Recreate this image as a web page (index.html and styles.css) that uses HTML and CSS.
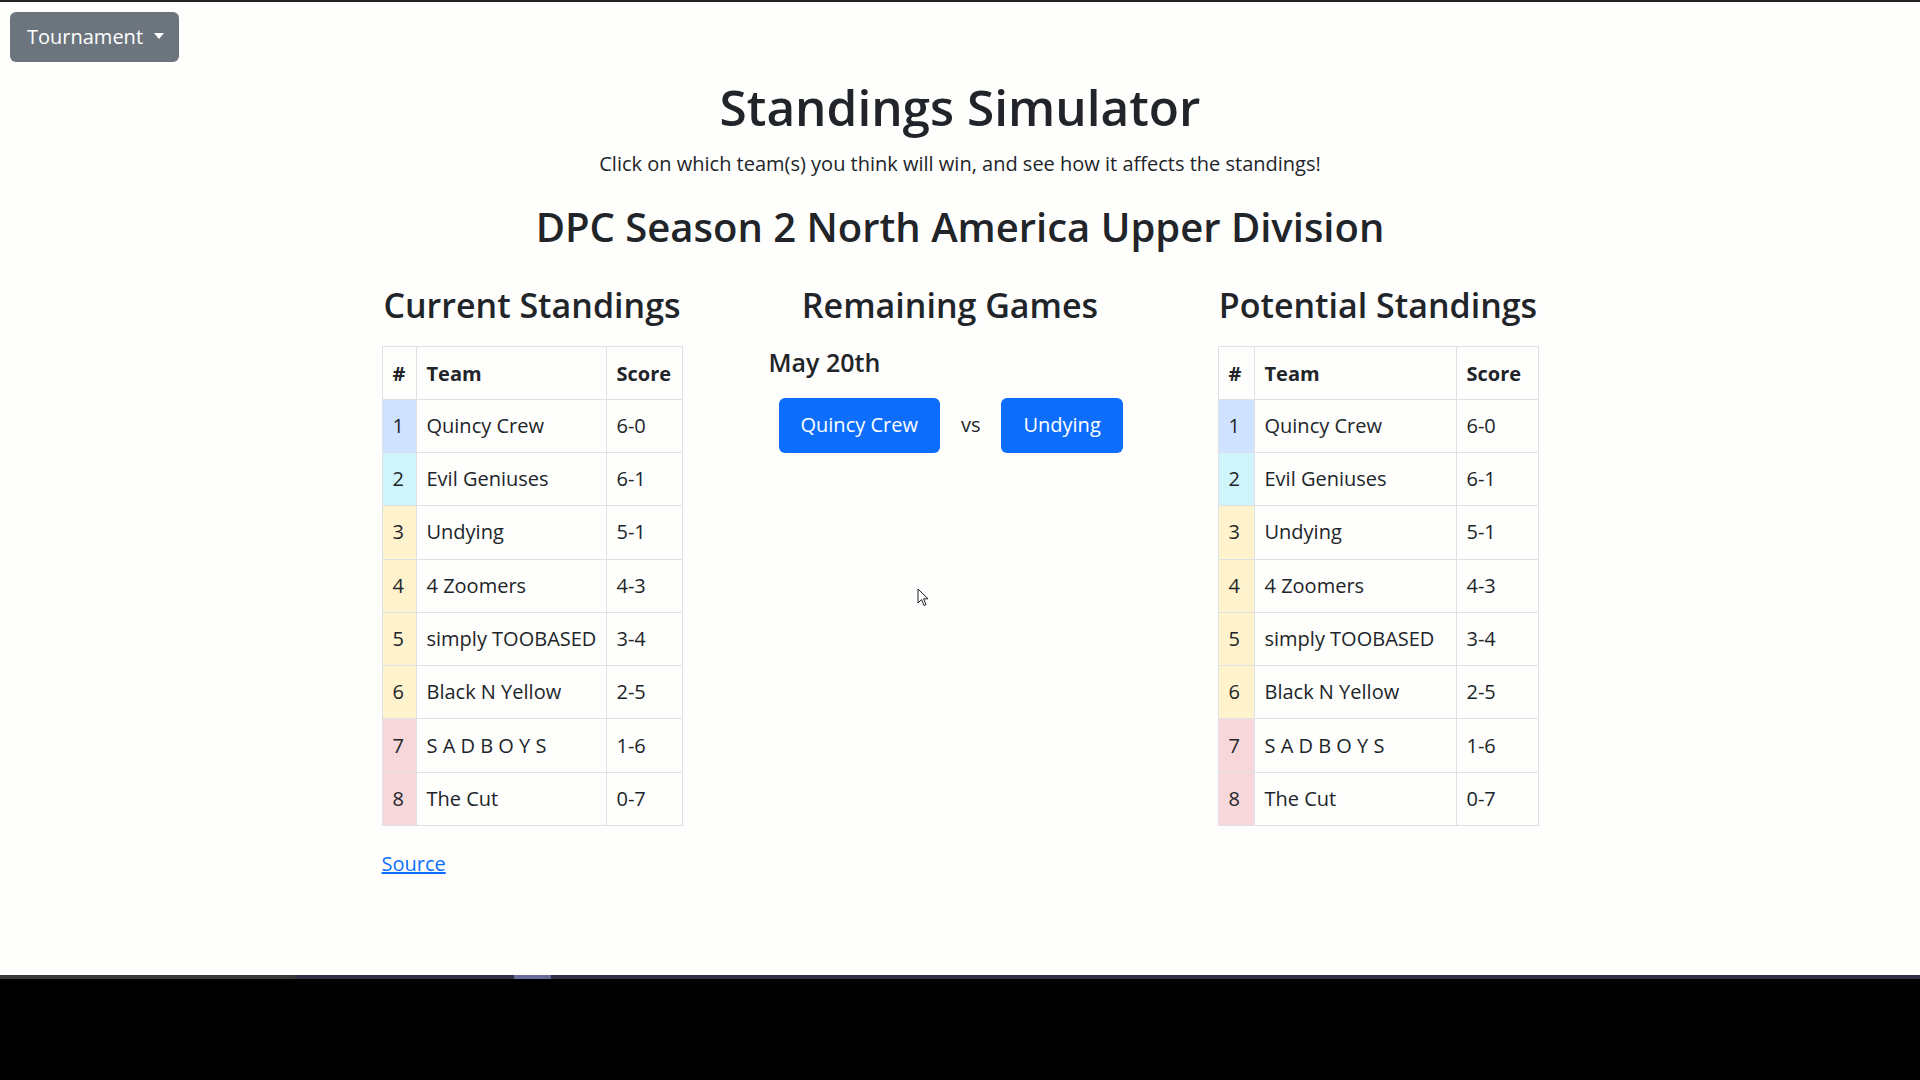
FILE: index.html
```html
<!DOCTYPE html>
<html lang="en">
<head>
<meta charset="utf-8">
<title>Standings Simulator</title>
<link rel="stylesheet" href="styles.css">
</head>
<body>
<div class="page">
  <nav class="nav">
    <button class="btn btn-secondary dropdown-toggle">Tournament</button>
  </nav>
  <main class="main">
    <h1 class="title">Standings Simulator</h1>
    <p class="lead">Click on which team(s) you think will win, and see how it affects the standings!</p>
    <h2 class="division">DPC Season 2 North America Upper Division</h2>
    <div class="row">
      <section class="col col-current">
        <h3 class="col-title">Current Standings</h3>
        <table class="table">
          <colgroup><col class="c-num"><col class="c-team"><col class="c-score"></colgroup>
          <thead><tr><th>#</th><th>Team</th><th>Score</th></tr></thead>
          <tbody>
            <tr><td class="rank primary">1</td><td>Quincy Crew</td><td>6-0</td></tr>
            <tr><td class="rank info">2</td><td>Evil Geniuses</td><td>6-1</td></tr>
            <tr><td class="rank warning">3</td><td>Undying</td><td>5-1</td></tr>
            <tr><td class="rank warning">4</td><td>4 Zoomers</td><td>4-3</td></tr>
            <tr><td class="rank warning">5</td><td>simply TOOBASED</td><td>3-4</td></tr>
            <tr><td class="rank warning">6</td><td>Black N Yellow</td><td>2-5</td></tr>
            <tr><td class="rank danger">7</td><td>S A D B O Y S</td><td>1-6</td></tr>
            <tr><td class="rank danger">8</td><td>The Cut</td><td>0-7</td></tr>
          </tbody>
        </table>
        <a class="source" href="#">Source</a>
      </section>
      <section class="col col-games">
        <h3 class="col-title">Remaining Games</h3>
        <div class="games">
          <h5 class="game-date">May 20th</h5>
          <div class="match">
            <button class="btn btn-primary">Quincy Crew</button>
            <span class="vs">vs</span>
            <button class="btn btn-primary">Undying</button>
          </div>
        </div>
      </section>
      <section class="col col-potential">
        <h3 class="col-title">Potential Standings</h3>
        <table class="table">
          <colgroup><col class="c-num"><col class="c-team"><col class="c-score"></colgroup>
          <thead><tr><th>#</th><th>Team</th><th>Score</th></tr></thead>
          <tbody>
            <tr><td class="rank primary">1</td><td>Quincy Crew</td><td>6-0</td></tr>
            <tr><td class="rank info">2</td><td>Evil Geniuses</td><td>6-1</td></tr>
            <tr><td class="rank warning">3</td><td>Undying</td><td>5-1</td></tr>
            <tr><td class="rank warning">4</td><td>4 Zoomers</td><td>4-3</td></tr>
            <tr><td class="rank warning">5</td><td>simply TOOBASED</td><td>3-4</td></tr>
            <tr><td class="rank warning">6</td><td>Black N Yellow</td><td>2-5</td></tr>
            <tr><td class="rank danger">7</td><td>S A D B O Y S</td><td>1-6</td></tr>
            <tr><td class="rank danger">8</td><td>The Cut</td><td>0-7</td></tr>
          </tbody>
        </table>
      </section>
    </div>
  </main>
  <svg class="cursor" width="12" height="19" viewBox="0 0 12 19"><path d="M1 1 L1 15 L4.5 11.5 L7 17.5 L9 16.6 L6.6 10.8 L11 10.8 Z" fill="#fff" stroke="#222" stroke-width="1"/></svg>
</div>
<div class="strip"><span class="strip-a"></span><span class="strip-b"></span></div>
</body>
</html>
```
FILE: styles.css
```css
* { box-sizing: border-box; }
html, body { margin: 0; padding: 0; }
body {
  background: #000;
  font-family: "Open Sans", "Noto Sans", sans-serif;
  color: #212529;
  font-size: 20px;
  line-height: 1.5;
}
.page {
  position: relative;
  height: 975px;
  background: #fefefc;
  border-top: 2px solid #222;
}
.nav { padding: 10px 10px 0; }
.btn {
  font-family: inherit;
  font-size: 20px;
  line-height: 30px;
  border: 1px solid transparent;
  border-radius: 6px;
  cursor: pointer;
}
.btn-secondary {
  display: inline-flex;
  align-items: center;
  background: #6c757d;
  color: #fff;
  height: 50px;
  padding: 0 14px 0 16px;
}
.dropdown-toggle::after {
  content: "";
  display: inline-block;
  margin-left: 11px;
  margin-top: -3px;
  border-top: 6px solid #fff;
  border-left: 5px solid transparent;
  border-right: 5px solid transparent;
}
.btn-primary {
  display: inline-block;
  background: #0d6efd;
  color: #fff;
  height: 55px;
  padding: 0 21px;
}
.main { text-align: center; }
h1, h2, h3, h5 { font-weight: 600; line-height: 1.2; margin: 0; }
.title { font-size: 49.5px; margin-top: 16px; }
.lead { margin: 11.5px 0 0; }
.division { font-size: 40px; margin-top: 24px; }
.row {
  display: flex;
  justify-content: center;
  margin-top: 34px;
}
.col { padding: 0 15px; text-align: center; }
.col-current { width: 331px; }
.col-games { width: 505px; }
.col-potential { width: 351px; }
.col-title {
  display: flex;
  justify-content: center;
  white-space: nowrap;
  font-size: 34px;
}
.table {
  width: 100%;
  margin-top: 20.5px;
  border-collapse: collapse;
  table-layout: fixed;
  text-align: left;
  border: 1px solid #dee2e6;
}
.col-current .c-num { width: 34px; }
.col-current .c-score { width: 76px; }
.col-potential .c-num { width: 36px; }
.col-potential .c-score { width: 82px; }
.table th, .table td {
  border: 1px solid #dee2e6;
  padding: 0 10px;
  height: 53.3px;
  white-space: nowrap;
}
.table thead th { height: 52.5px; font-weight: 700; padding-top: 2px; }
.primary { background: #cfe2ff; }
.info { background: #cff4fc; }
.warning { background: #fff3cd; }
.danger { background: #f8d7da; }
.source {
  display: block;
  text-align: left;
  margin-top: 23px;
  color: #0d6efd;
  text-decoration: underline;
}
.games { text-align: left; padding-left: 56px; margin-top: 21px; }
.game-date { font-size: 25px; }
.match {
  display: flex;
  align-items: center;
  margin-top: 21px;
  padding-left: 10px;
}
.vs { margin: 0 21px; }
.cursor { position: absolute; left: 917px; top: 586px; }
.strip { height: 4px; background: #2e2e44; position: relative; }
.strip-a { position: absolute; left: 0; top: 0; width: 295px; height: 4px; background: #3a3a3a; }
.strip-b { position: absolute; left: 514px; top: 0; width: 37px; height: 4px; background: #6a6a9a; }
```
